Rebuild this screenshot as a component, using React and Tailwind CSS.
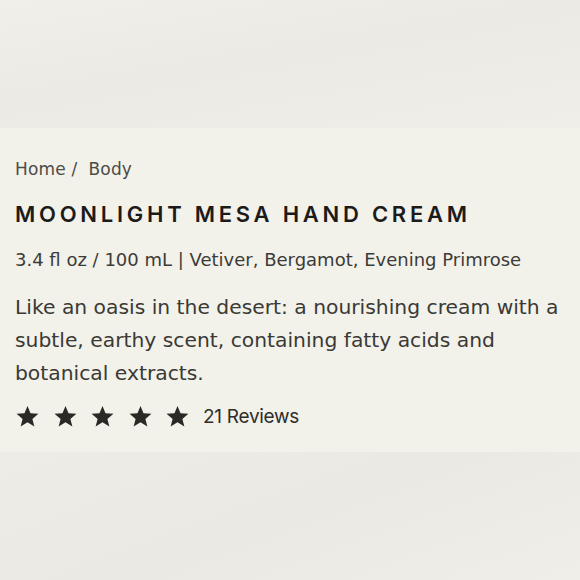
const Star = () => (
  <svg viewBox="0 0 24 24" className="w-[25px] h-[25px]" fill="#2a2925">
    <path d="M12 1.8l2.9 7.1 7.6.5-5.8 4.9 1.9 7.4L12 17.6l-6.6 4.1 1.9-7.4-5.8-4.9 7.6-.5z" />
  </svg>
);

export default function App() {
  return (
    <div className="w-[580px] h-[580px] flex flex-col bg-[#f2f1eb] font-['DejaVu_Sans',sans-serif]">
      <div className="h-[128px] bg-[linear-gradient(170deg,#f0efea_0%,#ebeae5_45%,#efeee9_100%)]" />

      <div className="h-[324px] bg-[#f2f1ea] px-[15px] pt-[29px]">
        <div className="text-[17px] leading-[24px] tracking-[0.01em] text-[#4d4c48]">
          Home / &nbsp;Body
        </div>
        <h1 className="mt-[19px] font-['Inter',sans-serif] text-[22px] leading-[28px] font-semibold tracking-[0.17em] text-[#1c1b19]">
          MOONLIGHT MESA HAND CREAM
        </h1>
        <div className="mt-[20px] text-[18px] leading-[24px] text-[#3c3b37]">
          3.4 fl oz / 100 mL | Vetiver, Bergamot, Evening Primrose
        </div>
        <p className="mt-[19px] text-[20.3px] leading-[33px] text-[#3a3935]">
          Like an oasis in the desert: a nourishing cream with a subtle, earthy scent, containing fatty acids and botanical extracts.
        </p>
        <div className="mt-[14px] flex items-center">
          <div className="flex gap-[12.5px]">
            <Star />
            <Star />
            <Star />
            <Star />
            <Star />
          </div>
          <span className="ml-[13px] font-['Inter',sans-serif] text-[19px] leading-[24px] tracking-[-0.015em] text-[#2f2e2a]">21 Reviews</span>
        </div>
      </div>

      <div className="h-[128px] bg-[linear-gradient(160deg,#edece7_0%,#eae9e4_50%,#efeee9_100%)]" />
    </div>
  );
}
